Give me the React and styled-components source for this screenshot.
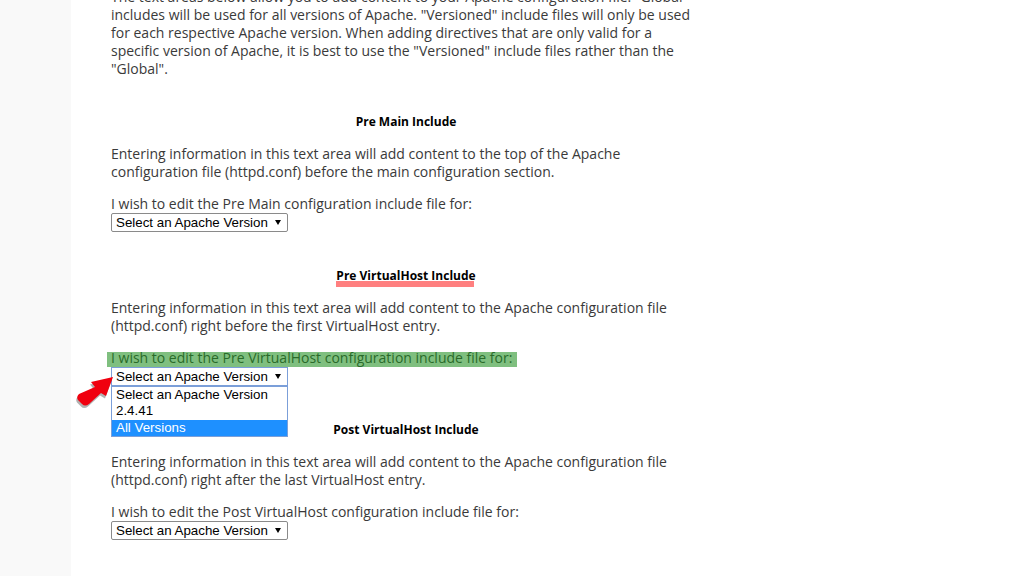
import React from "react";
import styled, { createGlobalStyle } from "styled-components";

const Global = createGlobalStyle`
  html, body { margin: 0; padding: 0; height: 576px; overflow: hidden; background: #fff; }
  #root { height: 576px; overflow: hidden; }
`;
const Page = styled.div`
  display: flex;
  height: 576px;
  overflow: hidden;
  font-family: "Open Sans", "Liberation Sans", sans-serif;
  font-size: 14px;
  line-height: 18px;
  color: #3a3a3a;
`;
const Rail = styled.div`
  width: 71px;
  flex: none;
  background: #f9f9f9;
`;
const Main = styled.main`
  width: 590px;
  margin-left: 40px;
  margin-top: -12px;
  flex: none;
`;
const Intro = styled.p`
  margin: 0 0 35px;
`;
const Section = styled.section`
  height: 154px;
`;
const Title = styled.h4`
  margin: 0 0 14px;
  font-size: 12px;
  line-height: 18px;
  font-weight: 700;
  color: #000;
  text-align: center;
`;
const TitleMark = styled.span`
  position: relative;
  display: inline-block;
  &::after {
    content: "";
    position: absolute;
    left: 0;
    right: 2px;
    top: 14px;
    height: 6px;
    background: rgba(255, 0, 0, 0.5);
  }
`;
const Para = styled.p`
  margin: 0 0 14px;
`;
const Label = styled.label`
  display: block;
  position: relative;
  color: ${p => (p.$marked ? "#555" : "inherit")};
`;
const GreenMark = styled.span`
  position: absolute;
  left: -4px;
  top: 3px;
  width: 410px;
  height: 15px;
  background: rgba(0, 128, 0, 0.5);
`;
const SelectWrap = styled.div`
  position: relative;
  width: 177px;
`;
const SelectBox = styled.div`
  box-sizing: border-box;
  width: 177px;
  height: 19px;
  border: 1px solid ${p => (p.$open ? "#7b9fd9" : "#8a8a8a")};
  border-radius: ${p => (p.$open ? "0" : "2px")};
  background: #fff;
  font: 13.33px/17px "Liberation Sans", Arial, sans-serif;
  color: #000;
  padding-left: 4px;
  display: flex;
  align-items: center;
  justify-content: space-between;
`;
const Caret = styled.span`
  width: 0;
  height: 0;
  margin-right: 6px;
  border-left: 3px solid transparent;
  border-right: 3px solid transparent;
  border-top: 5px solid #000;
`;
const Menu = styled.ul`
  position: absolute;
  left: 0;
  top: 19px;
  width: 177px;
  box-sizing: border-box;
  margin: 0;
  padding: 0;
  list-style: none;
  background: #fff;
  border: 1px solid #7b9fd9;
  font: 13.33px/16px "Liberation Sans", Arial, sans-serif;
  color: #000;
  z-index: 2;
`;
const Option = styled.li`
  height: 16.33px;
  padding-left: 4px;
  background: ${p => (p.$active ? "#1e90ff" : "#fff")};
  color: ${p => (p.$active ? "#fff" : "#000")};
`;
const Arrow = styled.svg`
  position: absolute;
  left: -35px;
  top: 0;
  width: 38px;
  height: 42px;
  z-index: 3;
`;

const arrowPath =
  "M37 10 L15 15 L19 20 L3 27 Q0 30 2 33 L6 37 Q9 40 13 37 L25 26 L30 29 Z";

const Select = ({ open }) => (
  <SelectWrap>
    <SelectBox $open={open}>
      Select an Apache Version
      <Caret />
    </SelectBox>
    {open && (
      <>
        <Menu>
          <Option>Select an Apache Version</Option>
          <Option>2.4.41</Option>
          <Option $active>All Versions</Option>
        </Menu>
        <Arrow viewBox="0 0 38 42">
          <path d={arrowPath} fill="#000" opacity="0.3" transform="translate(-1 2.5)" />
          <path d={arrowPath} fill="#f0000f" />
        </Arrow>
      </>
    )}
  </SelectWrap>
);

export default function App() {
  return (
    <Page>
      <Global />
      <Rail />
      <Main>
        <Intro>
          The text areas below allow you to add content to your Apache configuration file. "Global"
          includes will be used for all versions of Apache. "Versioned" include files will only be used
          for each respective Apache version. When adding directives that are only valid for a
          specific version of Apache, it is best to use the "Versioned" include files rather than the
          "Global".
        </Intro>
        <Section>
          <Title>Pre Main Include</Title>
          <Para>
            Entering information in this text area will add content to the top of the Apache
            configuration file (httpd.conf) before the main configuration section.
          </Para>
          <Label>I wish to edit the Pre Main configuration include file for:</Label>
          <Select />
        </Section>
        <Section>
          <Title>
            <TitleMark>Pre VirtualHost Include</TitleMark>
          </Title>
          <Para>
            Entering information in this text area will add content to the Apache configuration file
            (httpd.conf) right before the first VirtualHost entry.
          </Para>
          <Label $marked>
            I wish to edit the Pre VirtualHost configuration include file for:
            <GreenMark />
          </Label>
          <Select open />
        </Section>
        <Section>
          <Title>Post VirtualHost Include</Title>
          <Para>
            Entering information in this text area will add content to the Apache configuration file
            (httpd.conf) right after the last VirtualHost entry.
          </Para>
          <Label>I wish to edit the Post VirtualHost configuration include file for:</Label>
          <Select />
        </Section>
      </Main>
    </Page>
  );
}
